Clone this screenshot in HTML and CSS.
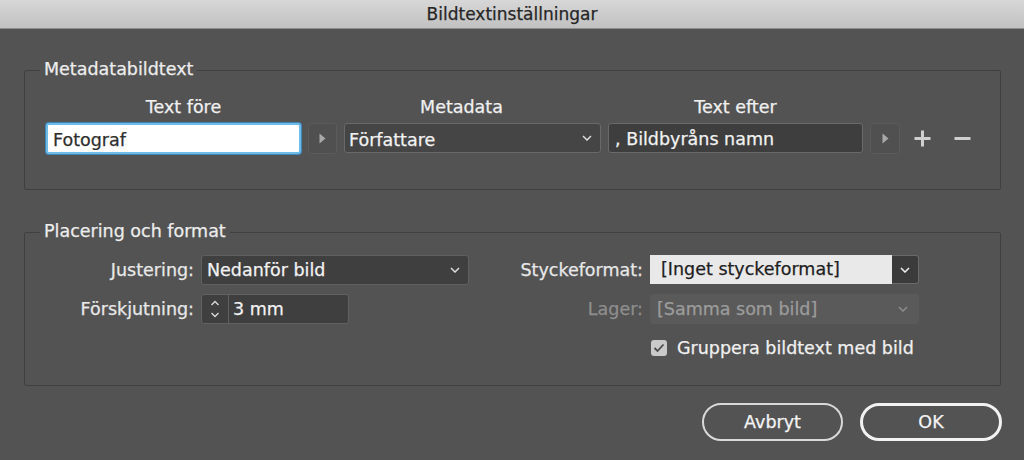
FILE: index.html
```html
<!DOCTYPE html>
<html lang="sv">
<head>
  <meta charset="UTF-8">
  <meta name="viewport" content="width=device-width, initial-scale=1.0">
  <title>Bildtextinställningar</title>
  <link rel="stylesheet" href="styles.css">
</head>
<body>
  <div class="titlebar">Bildtextinställningar</div>

  <div class="dialog">
    <!-- Metadata caption -->
    <div class="group group-meta">
      <span class="group-title">Metadatabildtext</span>
      <div class="meta-grid meta-head">
        <span class="head-before">Text före</span>
        <span></span>
        <span class="head-meta">Metadata</span>
        <span>Text efter</span>
      </div>
      <div class="meta-grid meta-row">
        <input class="field field-focus" type="text" value="Fotograf">
        <button class="arrow-btn" type="button">
          <svg width="7" height="11" viewBox="0 0 7 11"><path d="M0.5 0.5L6.5 5.5L0.5 10.5Z" fill="#a9a9a9"/></svg>
        </button>
        <div class="select select-meta">
          <span>Författare</span>
          <svg class="chev" width="10" height="6" viewBox="0 0 10 6"><path d="M1 1l4 4 4-4" fill="none" stroke="#dcdcdc" stroke-width="1.5"/></svg>
        </div>
        <input class="field field-dark" type="text" value=", Bildbyråns namn">
        <button class="arrow-btn" type="button">
          <svg width="7" height="11" viewBox="0 0 7 11"><path d="M0.5 0.5L6.5 5.5L0.5 10.5Z" fill="#a9a9a9"/></svg>
        </button>
        <button class="icon-btn" type="button">
          <svg width="17" height="17" viewBox="0 0 17 17"><path d="M8.5 0.5v16M0.5 8.5h16" stroke="#cfcfcf" stroke-width="3"/></svg>
        </button>
        <button class="icon-btn" type="button">
          <svg width="17" height="17" viewBox="0 0 17 17"><path d="M0.5 8.5h16" stroke="#cfcfcf" stroke-width="3"/></svg>
        </button>
      </div>
    </div>

    <!-- Placement and format -->
    <div class="group group-place">
      <span class="group-title">Placering och format</span>
      <div class="place-grid">
        <label class="lbl">Justering:</label>
        <div class="select select-align">
          <span>Nedanför bild</span>
          <svg class="chev" width="10" height="6" viewBox="0 0 10 6"><path d="M1 1l4 4 4-4" fill="none" stroke="#dcdcdc" stroke-width="1.5"/></svg>
        </div>
        <label class="lbl">Styckeformat:</label>
        <div class="combo">
          <span class="combo-text">[Inget styckeformat]</span>
          <span class="combo-btn">
            <svg width="10" height="6" viewBox="0 0 10 6"><path d="M1 1l4 4 4-4" fill="none" stroke="#f0f0f0" stroke-width="1.5"/></svg>
          </span>
        </div>

        <label class="lbl">Förskjutning:</label>
        <div class="spin">
          <span class="spin-arrows">
            <svg width="10" height="20" viewBox="0 0 10 20"><path d="M1.5 6l3.5-3.5 3.5 3.5M1.5 14l3.5 3.5 3.5-3.5" fill="none" stroke="#d8d8d8" stroke-width="1.4"/></svg>
          </span>
          <span class="spin-value">3 mm</span>
        </div>
        <label class="lbl lbl-off">Lager:</label>
        <div class="select select-off">
          <span>[Samma som bild]</span>
          <svg class="chev" width="10" height="6" viewBox="0 0 10 6"><path d="M1 1l4 4 4-4" fill="none" stroke="#8c8c8c" stroke-width="1.5"/></svg>
        </div>

        <div class="check-cell">
          <span class="check">
            <svg width="12" height="10" viewBox="0 0 12 10"><path d="M1.5 5l3 3 6-6.5" fill="none" stroke="#4c4c4c" stroke-width="1.8"/></svg>
          </span>
          <span>Gruppera bildtext med bild</span>
        </div>
      </div>
    </div>

    <div class="footer">
      <button class="pill" type="button">Avbryt</button>
      <button class="pill pill-default" type="button">OK</button>
    </div>
  </div>
</body>
</html>
```

FILE: styles.css
```css
body {
  margin: 0;
  width: 1024px;
  height: 460px;
  overflow: hidden;
  background-color: #535353;
  font-family: "DejaVu Sans", sans-serif;
  font-size: 17.5px;
  color: #e8e8e8;
  -webkit-text-stroke: 0.25px;
}

.titlebar {
  height: 28px;
  line-height: 28px;
  font-size: 17px;
  text-align: center;
  color: #262626;
  background: linear-gradient(#d7d7d7, #c1c1c1);
  border-bottom: 1px solid #8e8e8e;
}

.dialog {
  padding-left: 24px;
}

/* group boxes */
.group {
  position: relative;
  box-sizing: border-box;
  width: 977px;
  border: 1px solid #404040;
  border-radius: 2px;
}
.group-title {
  position: absolute;
  left: 15px;
  top: -12px;
  padding: 0 4px;
  line-height: 20px;
  background-color: #535353;
  color: #ededed;
}
.group-meta {
  margin-top: 41px;
  height: 120px;
  padding: 26px 0 0 21px;
}
.group-place {
  margin-top: 42px;
  height: 154px;
  padding-top: 22px;
}

/* metadata row */
.meta-grid {
  display: grid;
  grid-template-columns: 255px 29px 257px 255px 30px 30px 36px;
  column-gap: 7px;
}
.meta-head {
  line-height: 20px;
  text-align: center;
  color: #f0f0f0;
}
.head-before {
  padding-left: 20px;
}
.head-meta {
  padding-right: 22px;
}
.meta-row {
  margin-top: 6px;
  height: 30px;
}

.field {
  box-sizing: border-box;
  height: 30px;
  margin: 0;
  padding-top: 3px;
  font: inherit;
  border-radius: 3px;
  outline: none;
}
.field-focus {
  height: 31px;
  padding-left: 5px;
  background-color: #ffffff;
  color: #2e2e2e;
  border: 2px solid #6fbbe8;
  box-shadow: 0 0 0 1px #3f86bd;
}
.field-dark {
  padding-left: 6px;
  background-color: #3e3e3e;
  color: #f2f2f2;
  border: 1px solid #6a6a6a;
}

.arrow-btn,
.icon-btn {
  display: flex;
  align-items: center;
  justify-content: center;
  padding: 0;
  margin: 0;
  background: none;
  cursor: pointer;
}
.arrow-btn {
  border: 1px solid #5b5b5b;
  border-radius: 3px;
  background-color: #505050;
}
.icon-btn {
  border: none;
}

.select {
  box-sizing: border-box;
  height: 30px;
  display: flex;
  align-items: center;
  justify-content: space-between;
  padding: 0 8px 0 4px;
  border: 1px solid #696969;
  border-radius: 3px;
  background-color: #454545;
  color: #f2f2f2;
}
.select-meta span {
  padding-top: 3px;
}
.select-align {
  padding-left: 5px;
  background-color: #3f3f3f;
  border-color: #606060;
}
.select-off {
  padding-left: 6px;
  padding-right: 10px;
  background-color: #5a5a5a;
  border-color: #5a5a5a;
  color: #9c9c9c;
}

/* placement grid */
.place-grid {
  display: grid;
  grid-template-columns: 169px 268px 167px 269px;
  grid-template-rows: 30px 30px 30px;
  column-gap: 7px;
  row-gap: 9px;
}
.lbl {
  line-height: 30px;
  text-align: right;
  color: #e8e8e8;
}
.lbl-off {
  color: #8e8e8e;
}

.combo {
  display: flex;
  height: 29px;
}
.combo-text {
  flex: 1;
  box-sizing: border-box;
  padding-left: 11px;
  line-height: 29px;
  background-color: #e9e9e9;
  color: #1e1e1e;
}
.combo-btn {
  width: 27px;
  display: flex;
  align-items: center;
  justify-content: center;
  box-sizing: border-box;
  background-color: #3b3b3b;
  border: 1px solid #6a6a6a;
  border-left: none;
  border-radius: 0 3px 3px 0;
}

.spin {
  display: flex;
  width: 148px;
  box-sizing: border-box;
  border: 1px solid #616161;
  border-radius: 3px;
  background-color: #3f3f3f;
}
.spin-arrows {
  width: 26px;
  display: flex;
  align-items: center;
  justify-content: center;
  border-right: 1px solid #616161;
}
.spin-value {
  padding-left: 4px;
  line-height: 28px;
  color: #f2f2f2;
}

.check-cell {
  grid-column: 4;
  grid-row: 3;
  display: flex;
  align-items: center;
  gap: 10px;
  color: #f0f0f0;
}
.check {
  width: 16px;
  height: 16px;
  margin-left: 1px;
  display: flex;
  align-items: center;
  justify-content: center;
  border-radius: 3px;
  background-color: #cacaca;
}

/* buttons */
.footer {
  width: 978px;
  margin-top: 17px;
  display: flex;
  justify-content: flex-end;
  gap: 17px;
}
.pill {
  box-sizing: border-box;
  width: 141px;
  height: 38px;
  padding: 0;
  font: inherit;
  color: #f4f4f4;
  background: none;
  border: 2px solid #d9d9d9;
  border-radius: 19px;
  cursor: pointer;
}
.pill-default {
  width: 142px;
  border: 3px solid #f2f2f2;
}
```
